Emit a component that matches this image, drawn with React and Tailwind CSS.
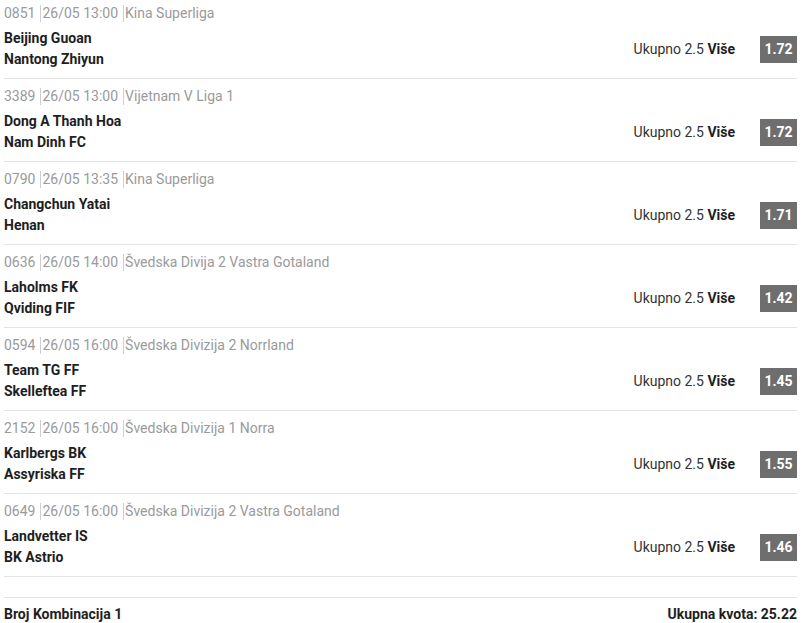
import React from 'react'

const matches = [
  { id: '0851', time: '26/05 13:00', league: 'Kina Superliga', home: 'Beijing Guoan', away: 'Nantong Zhiyun', odd: '1.72' },
  { id: '3389', time: '26/05 13:00', league: 'Vijetnam V Liga 1', home: 'Dong A Thanh Hoa', away: 'Nam Dinh FC', odd: '1.72' },
  { id: '0790', time: '26/05 13:35', league: 'Kina Superliga', home: 'Changchun Yatai', away: 'Henan', odd: '1.71' },
  { id: '0636', time: '26/05 14:00', league: 'Švedska Divija 2 Vastra Gotaland', home: 'Laholms FK', away: 'Qviding FIF', odd: '1.42' },
  { id: '0594', time: '26/05 16:00', league: 'Švedska Divizija 2 Norrland', home: 'Team TG FF', away: 'Skelleftea FF', odd: '1.45' },
  { id: '2152', time: '26/05 16:00', league: 'Švedska Divizija 1 Norra', home: 'Karlbergs BK', away: 'Assyriska FF', odd: '1.55' },
  { id: '0649', time: '26/05 16:00', league: 'Švedska Divizija 2 Vastra Gotaland', home: 'Landvetter IS', away: 'BK Astrio', odd: '1.46' },
]

const MatchRow = ({ m, first }) => (
  <div className={`flex items-end border-b border-[#e3e3e3] pb-2 ${first ? 'pt-[3px]' : 'pt-[7px]'}`}>
    <div className="flex-1">
      <div className="h-5 leading-5 text-[14px] text-[#9a9a9a] flex items-center">
        <span>{m.id}</span>
        <span className="ml-[5px] h-[17px] border-l border-[#cfcfcf] pl-[1px] leading-[17px]">{m.time}</span>
        <span className="ml-[5px] h-[17px] border-l border-[#cfcfcf] pl-[1px] leading-[17px]">{m.league}</span>
      </div>
      <div className="mt-[5px] text-[14px] font-bold text-[#1e1e1e] leading-[21px]">
        <div>{m.home}</div>
        <div>{m.away}</div>
      </div>
    </div>
    <div className="flex items-center h-[42px]">
      <span className="text-[14px] text-[#333]">
        Ukupno 2.5 <span className="font-bold text-[#1e1e1e]">Više</span>
      </span>
      <span className="ml-[25px] w-[37px] h-[27px] bg-[#6e6e6e] text-white font-bold text-[14px] flex items-center justify-center">
        {m.odd}
      </span>
    </div>
  </div>
)

export default function App() {
  return (
    <div className="w-[802px] h-[623px] overflow-hidden bg-white font-['Roboto',sans-serif]">
      <div className="pl-1 w-[797px]">
        {matches.map((m, i) => (
          <MatchRow key={m.id} m={m} first={i === 0} />
        ))}
        <div className="h-[21px] border-b border-[#e3e3e3]" />
        <div className="flex justify-between items-center h-[32px] text-[14px] font-bold text-[#1e1e1e]">
          <span>Broj Kombinacija 1</span>
          <span>Ukupna kvota: 25.22</span>
        </div>
      </div>
    </div>
  )
}
